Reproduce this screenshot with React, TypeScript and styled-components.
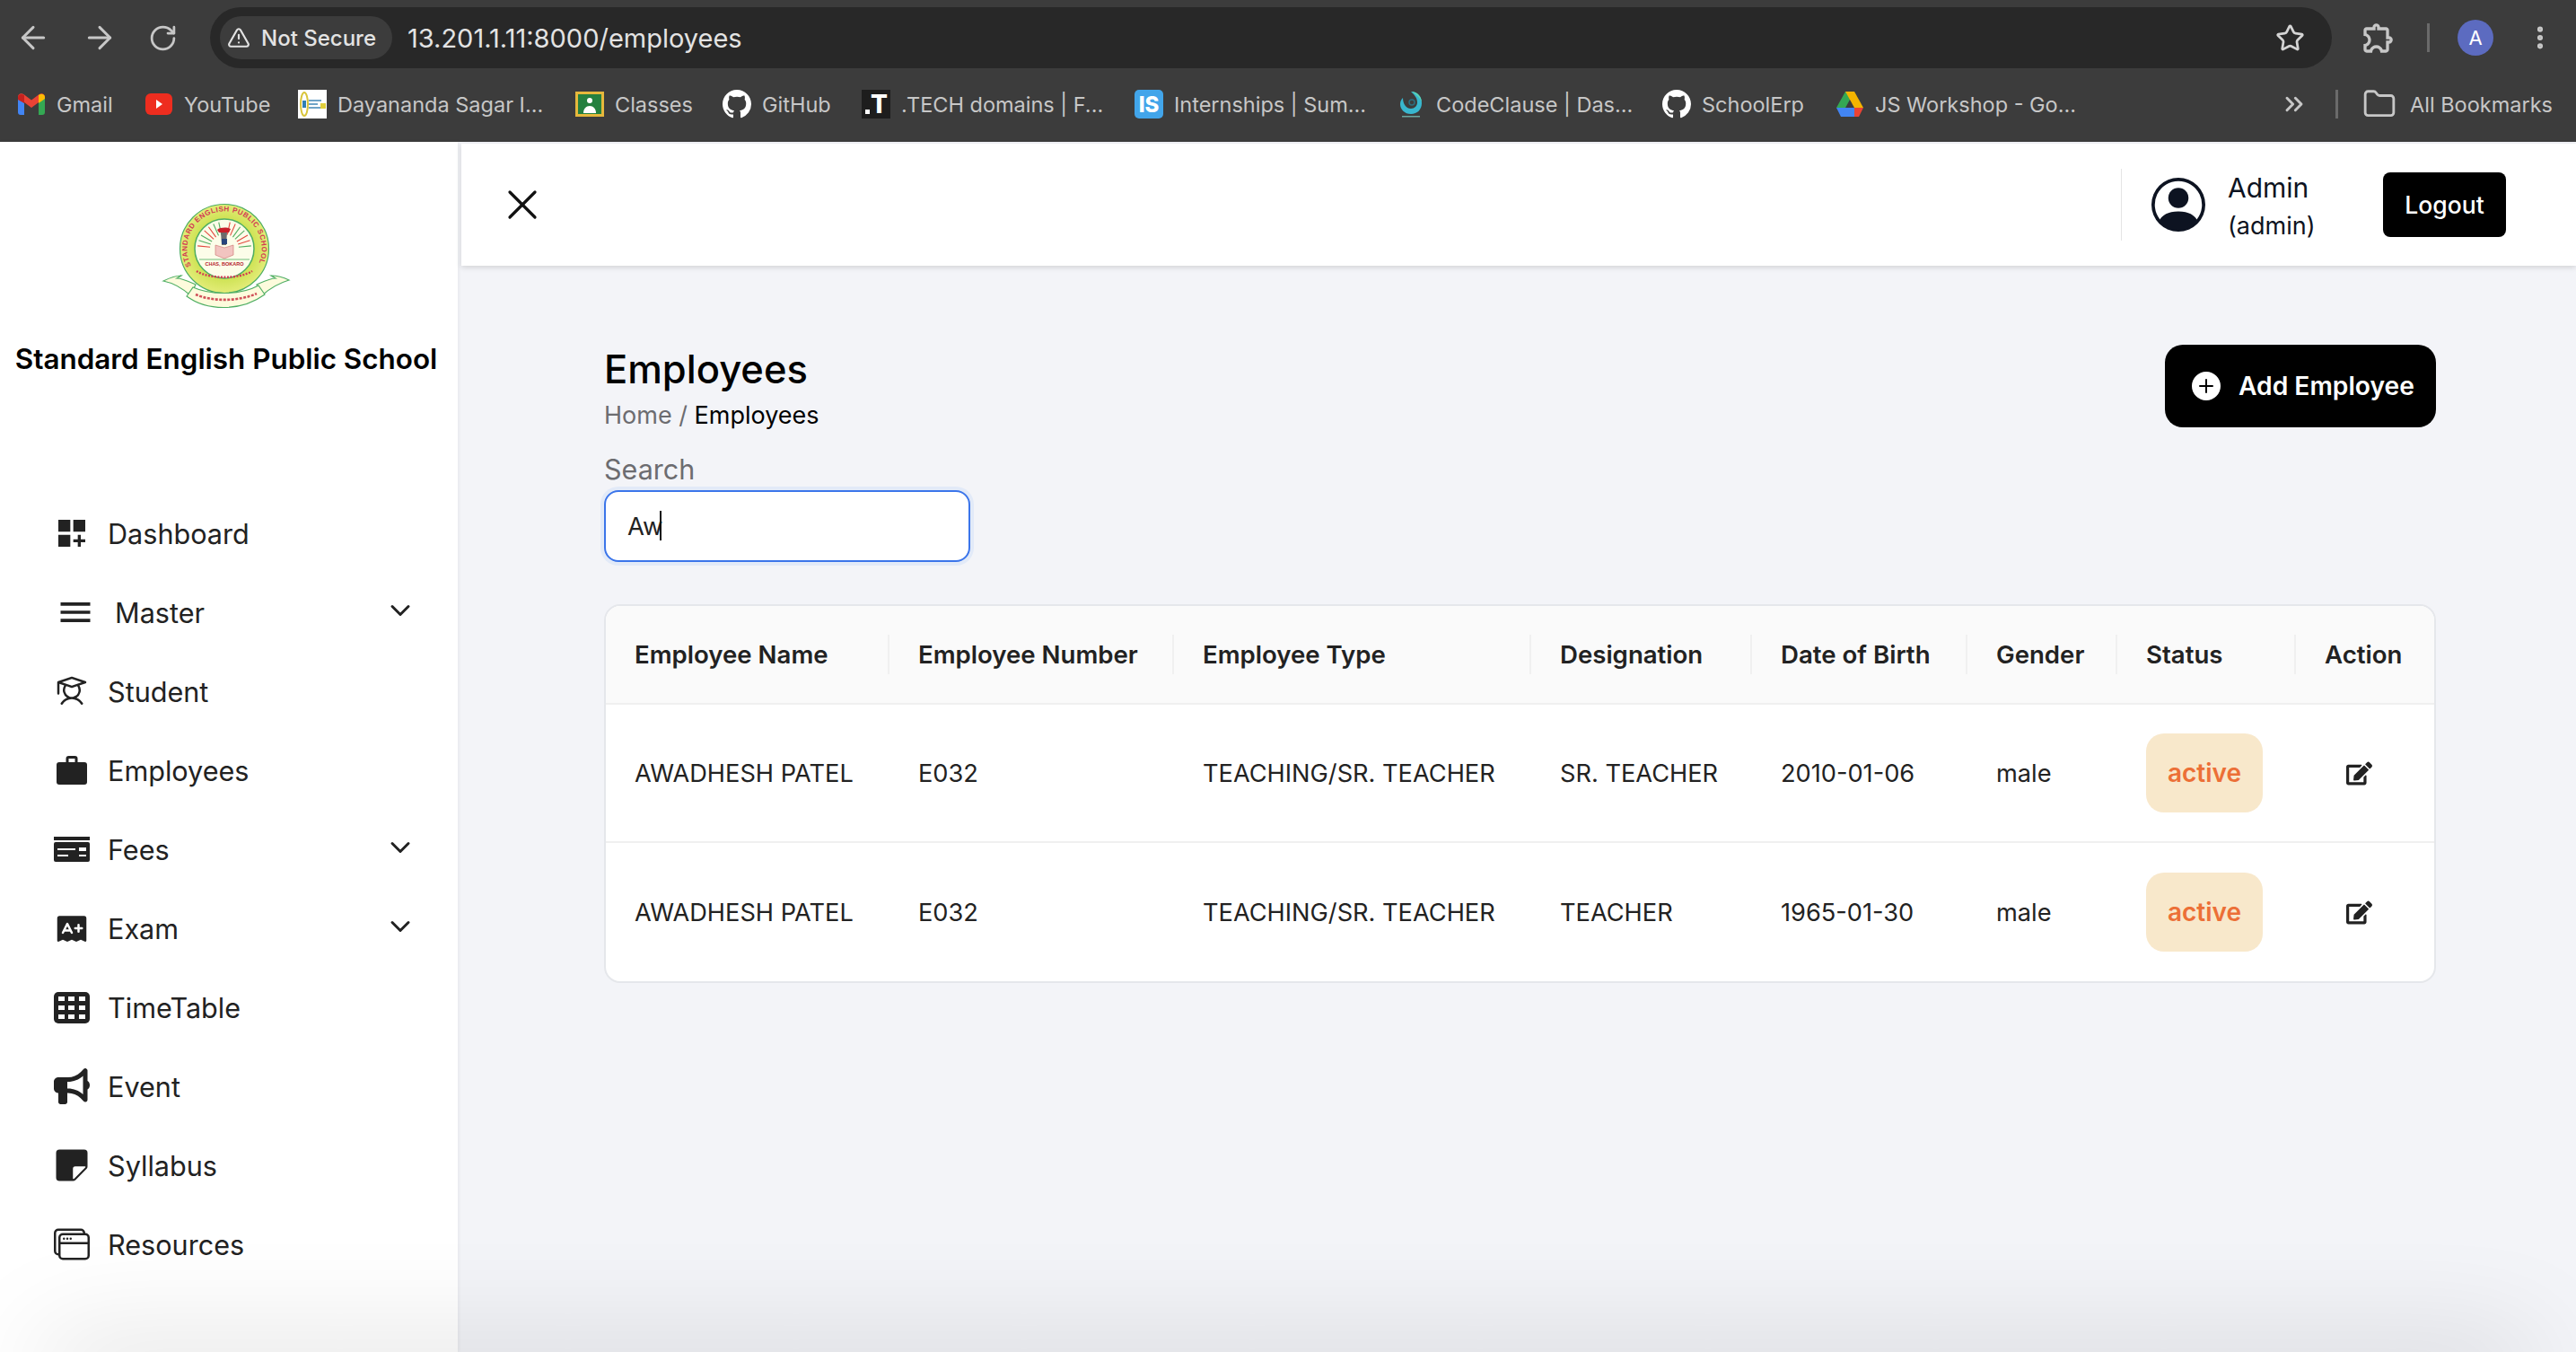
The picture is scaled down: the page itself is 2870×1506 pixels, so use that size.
import styled, { createGlobalStyle } from "styled-components";
import { ReactNode } from "react";
import {
  ArrowLeft,
  ArrowRight,
  ChevronDown,
  ChevronsRight,
  EllipsisVertical,
  Folder,
  RotateCw,
  Star,
  TriangleAlert,
  X,
} from "lucide-react";
import { BsGithub, BsPersonCircle, BsPlusCircleFill, BsStickyFill, BsWindowStack } from "react-icons/bs";
import { FaEdit } from "react-icons/fa";
import { FaBullhorn } from "react-icons/fa6";
import { MdDashboardCustomize, MdMenu, MdOutlineExtension } from "react-icons/md";
import { PiExamFill, PiStudent } from "react-icons/pi";

const GmailIcon = () => (
  <svg width="30" height="24" viewBox="0 0 30 24">
    <path d="M0 4v17a3 3 0 0 0 3 3h4V11z" fill="#4285f4" />
    <path d="M30 4v17a3 3 0 0 1-3 3h-4V11z" fill="#34a853" />
    <path d="M0 4c0-4 4-5 7-2.500l8 6 8-6c3-2.500 7-1.500 7 2.500l-7 6-8 6-8-6z" fill="#ea4335" />
    <path d="M23 2v9l7-5V4c0-3-4-4.500-7-2z" fill="#fbbc04" />
    <path d="M0 4v3l7 4V2C4 0 0 1 0 4z" fill="#c5221f" />
  </svg>
);

const YoutubeIcon = () => (
  <svg width="30" height="32" viewBox="0 0 30 32">
    <rect y="4" width="30" height="24" rx="6" fill="#ee2d1f" />
    <path d="M12 11l7 5-7 5z" fill="#fff" />
  </svg>
);

const CollegeIcon = () => (
  <svg width="32" height="32" viewBox="0 0 32 32">
    <rect width="32" height="32" fill="#fff" />
    <ellipse cx="7" cy="16" rx="4" ry="13" fill="none" stroke="#d8c43a" strokeWidth="2" />
    <rect x="5" y="12" width="4" height="8" fill="#2f7fb5" />
    <rect x="12" y="11" width="14" height="2" fill="#6fa3c7" />
    <rect x="12" y="15" width="10" height="2" fill="#6fa3c7" />
    <rect x="12" y="19" width="14" height="2" fill="#6fa3c7" />
    <rect x="25" y="15" width="6" height="6" fill="#e0cf3c" />
  </svg>
);

const ClassesIcon = () => (
  <svg width="32" height="32" viewBox="0 0 32 32">
    <rect y="2" width="32" height="28" fill="#e6b83c" />
    <rect x="3" y="5" width="26" height="22" fill="#25803f" />
    <circle cx="16" cy="12" r="3" fill="#fff" />
    <path d="M9 26c0-5 3-8 7-8s7 3 7 8z" fill="#fff" />
  </svg>
);

const DotTIcon = () => (
  <TechTile>
    <TechDot />T
  </TechTile>
);

const InternshipIcon = () => <InternTile>IS</InternTile>;

const CodeClauseIcon = () => (
  <svg width="26" height="32" viewBox="0 0 26 32">
    <path d="M13 2c8 0 12 6 12 13 0 7-5 12-12 12S1 22 1 16c0-3 1-5 3-7 0 6 3 12 9 12 4 0 7-3 7-7 0-5-3-8-7-12z" fill="#38b7cf" />
    <path d="M14 2c6 1 11 5 11 13 0-4-4-8-11-13z" fill="#5fd6b0" />
    <circle cx="14" cy="14" r="3" fill="none" stroke="#2b6f80" strokeWidth="1.500" />
    <rect x="3" y="29" width="20" height="1.500" fill="#6ba8a0" />
  </svg>
);

const DriveIcon = () => (
  <svg width="30" height="30" viewBox="0 0 30 30">
    <path d="M10 1h10L10 19H0z" fill="#34a853" />
    <path d="M20 1l10 18H20L10 1z" fill="#f4b400" />
    <path d="M0 19h20v10H5z" fill="#4285f4" />
    <path d="M20 19h10l-5 10h-5z" fill="#ea4335" />
  </svg>
);

const BriefcaseIcon = () => (
  <svg width="34" height="32" viewBox="0 0 34 32">
    <path d="M12 8V3a1.500 1.500 0 0 1 1.500-1.500h7A1.500 1.500 0 0 1 22 3v5" fill="none" stroke="#222" strokeWidth="3" />
    <rect y="7" width="34" height="25" rx="3" fill="#222" />
  </svg>
);

const FeesIcon = () => (
  <svg width="40" height="28" viewBox="0 0 40 28">
    <rect width="40" height="4" fill="#222" />
    <rect y="6" width="40" height="22" rx="2" fill="#222" />
    <rect x="4" y="13" width="20" height="2" fill="#fff" />
    <rect x="28" y="12" width="8" height="4" fill="#fff" />
    <rect x="4" y="20" width="12" height="2" fill="#fff" />
    <rect x="28" y="20" width="8" height="2" fill="#fff" />
  </svg>
);

const TimetableIcon = () => (
  <svg width="40" height="35" viewBox="0 0 40 35">
    <rect width="40" height="35" rx="5" fill="#222" />
    {[5, 16, 28].map((x) =>
      [5, 15, 25].map((y) => <rect key={`${x}-${y}`} x={x} y={y} width="7" height="5" fill="#fff" />)
    )}
  </svg>
);

const SchoolLogo = () => (
  <LogoSvg width="140" height="113" viewBox="0 0 140 113">
    <defs>
      <path id="crest-arc" d="M 31 66 A 41.600 41.600 0 1 1 105 66" />
      <radialGradient id="crest-ring">
        <stop offset="62%" stopColor="#cbe14f" />
        <stop offset="100%" stopColor="#e3ec78" />
      </radialGradient>
    </defs>
    <path d="M0 83c8-4 14-6 20-6l-5 3c6 0 12 3 21 7l-6 12C20 90 10 85 0 83z" fill="#fdfbdc" stroke="#4fae63" strokeWidth="1.200" />
    <path d="M140 82c-8-4-14-5-20-5l5 3c-6 0-12 3-21 7l6 12c10-9 20-14 30-17z" fill="#fdfbdc" stroke="#4fae63" strokeWidth="1.200" />
    <circle cx="68" cy="47" r="49.500" fill="url(#crest-ring)" stroke="#4fae63" strokeWidth="1.200" />
    <circle cx="68" cy="47" r="33" fill="#fcfde9" stroke="#4fae63" strokeWidth="1.500" />
    <text fontFamily="Liberation Sans, sans-serif" fontSize="8" fontWeight="700" fill="#d23a52">
      <textPath href="#crest-arc" textLength="166">
        STANDARD ENGLISH PUBLIC SCHOOL
      </textPath>
    </text>
    {[-84, -60, -36, -12, 12, 36, 60, 84].map((a, i) => (
      <line
        key={a}
        x1="68"
        y1="31"
        x2="68"
        y2="17"
        stroke={i % 2 ? "#50ad60" : "#e2483f"}
        strokeWidth="1.100"
        transform={`rotate(${a} 68 47)`}
      />
    ))}
    {[-72, -48, -24, 24, 48, 72].map((a, i) => (
      <line
        key={a}
        x1="68"
        y1="31"
        x2="68"
        y2="17"
        stroke={i % 2 ? "#e2483f" : "#50ad60"}
        strokeWidth="1.100"
        transform={`rotate(${a} 68 47)`}
      />
    ))}
    <path d="M60 26c3-3 12-3 15-1l-2 4H62z" fill="#c8202a" />
    <path d="M64 29h7l-1 14h-5z" fill="#6b6b6b" />
    <rect x="65" y="36" width="6" height="6" fill="#26457c" />
    <path d="M58 43l10 3 10-3v11l-10 4-10-4z" fill="#f2c4c0" stroke="#c9706d" strokeWidth="0.600" />
    <line x1="40" y1="59" x2="96" y2="59" stroke="#4fae63" strokeWidth="0.800" />
    <text x="68" y="66" textAnchor="middle" fontFamily="Liberation Sans, sans-serif" fontSize="5.500" fontWeight="700" fill="#b5202c">
      CHAS, BOKARO
    </text>
    <path d="M37 72c14 9 48 9 62 0" fill="none" stroke="#d23a52" strokeWidth="2.400" strokeDasharray="2 1.500" />
    <path d="M33 90c20 9 53 9 73-2l7 10c-26 19-64 19-87 2z" fill="#fdfbdc" stroke="#4fae63" strokeWidth="1.200" />
    <path d="M36 98c18 8 48 8 68-1" fill="none" stroke="#d0525a" strokeWidth="2.600" strokeDasharray="3 1.500" />
  </LogoSvg>
);

const bookmarks: { label: string; width: number; icon: ReactNode }[] = [
  { label: "Gmail", width: 142, icon: <GmailIcon /> },
  { label: "YouTube", width: 171, icon: <YoutubeIcon /> },
  { label: "Dayananda Sagar I...", width: 309, icon: <CollegeIcon /> },
  { label: "Classes", width: 164, icon: <ClassesIcon /> },
  { label: "GitHub", width: 155, icon: <BsGithub size={32} color="#fff" /> },
  { label: ".TECH domains | F...", width: 304, icon: <DotTIcon /> },
  { label: "Internships | Sum...", width: 292, icon: <InternshipIcon /> },
  { label: "CodeClause | Das...", width: 296, icon: <CodeClauseIcon /> },
  { label: "SchoolErp", width: 193, icon: <BsGithub size={32} color="#fff" /> },
  { label: "JS Workshop - Go...", width: 495, icon: <DriveIcon /> },
];

const navItems: { label: string; icon: ReactNode; slot?: number; caret?: boolean }[] = [
  { label: "Dashboard", icon: <MdDashboardCustomize size={40} /> },
  { label: "Master", icon: <MdMenu size={44} />, slot: 48, caret: true },
  { label: "Student", icon: <PiStudent size={40} /> },
  { label: "Employees", icon: <BriefcaseIcon /> },
  { label: "Fees", icon: <FeesIcon />, caret: true },
  { label: "Exam", icon: <PiExamFill size={40} />, caret: true },
  { label: "TimeTable", icon: <TimetableIcon /> },
  { label: "Event", icon: <FaBullhorn size={40} /> },
  { label: "Syllabus", icon: <BsStickyFill size={40} /> },
  { label: "Resources", icon: <BsWindowStack size={40} /> },
];

const columns = [
  { title: "Employee Name", width: 316 },
  { title: "Employee Number", width: 317 },
  { title: "Employee Type", width: 398 },
  { title: "Designation", width: 246 },
  { title: "Date of Birth", width: 240 },
  { title: "Gender", width: 167 },
  { title: "Status", width: 199 },
  { title: "Action", width: 154 },
];

const employees = [
  { name: "AWADHESH PATEL", no: "E032", type: "TEACHING/SR. TEACHER", designation: "SR. TEACHER", dob: "2010-01-06", gender: "male" },
  { name: "AWADHESH PATEL", no: "E032", type: "TEACHING/SR. TEACHER", designation: "TEACHER", dob: "1965-01-30", gender: "male" },
];

export default function App() {
  return (
    <>
      <GlobalStyle />
      <Page>
        <Chrome>
          <ToolRow>
            <NavButtons>
              <ArrowLeft size={40} strokeWidth={1.8} />
              <ArrowRight size={40} strokeWidth={1.8} />
              <RotateCw size={33} strokeWidth={2} />
            </NavButtons>
            <Omnibox>
              <SecurityChip>
                <TriangleAlert size={26} />
                Not Secure
              </SecurityChip>
              <Url>13.201.1.11:8000/employees</Url>
              <Star size={33} />
            </Omnibox>
            <ToolIcons>
              <MdOutlineExtension size={40} />
              <ToolDivider />
              <ProfileDot>A</ProfileDot>
              <EllipsisVertical size={32} strokeWidth={2.6} />
            </ToolIcons>
          </ToolRow>
          <BookmarkRow>
            {bookmarks.map((b) => (
              <Bookmark key={b.label} $width={b.width}>
                <FavSlot>{b.icon}</FavSlot>
                {b.label}
              </Bookmark>
            ))}
            <ChevronsRight size={32} strokeWidth={2.2} />
            <BarDivider />
            <AllBookmarks>
              <Folder size={38} strokeWidth={1.8} />
              All Bookmarks
            </AllBookmarks>
          </BookmarkRow>
        </Chrome>

        <Body>
          <Sidebar>
            <Brand>
              <SchoolLogo />
              <BrandName>Standard English Public School</BrandName>
            </Brand>
            <Nav>
              {navItems.map((item) => (
                <NavRow key={item.label}>
                  <NavIcon $width={item.slot ?? 40}>{item.icon}</NavIcon>
                  <span>{item.label}</span>
                  {item.caret && (
                    <Caret>
                      <ChevronDown size={36} strokeWidth={2} />
                    </Caret>
                  )}
                </NavRow>
              ))}
            </Nav>
          </Sidebar>

          <Main>
            <TopBar>
              <X size={56} strokeWidth={1.4} color="#111" />
              <UserArea>
                <BsPersonCircle size={60} color="#0d1321" />
                <UserText>
                  <UserName>Admin</UserName>
                  <UserRole>(admin)</UserRole>
                </UserText>
                <LogoutButton>Logout</LogoutButton>
              </UserArea>
            </TopBar>

            <Content>
              <PageHead>
                <div>
                  <Title>Employees</Title>
                  <Crumbs>
                    Home / <b>Employees</b>
                  </Crumbs>
                </div>
                <AddButton>
                  <BsPlusCircleFill size={32} />
                  Add Employee
                </AddButton>
              </PageHead>

              <SearchLabel>Search</SearchLabel>
              <SearchBox>
                <SearchInput defaultValue="Aw" readOnly />
                <InputCaret />
              </SearchBox>

              <TableCard>
                <Table>
                  <colgroup>
                    {columns.map((c) => (
                      <Col key={c.title} $width={c.width} />
                    ))}
                  </colgroup>
                  <thead>
                    <tr>
                      {columns.map((c) => (
                        <Th key={c.title}>{c.title}</Th>
                      ))}
                    </tr>
                  </thead>
                  <tbody>
                    {employees.map((e) => (
                      <tr key={e.dob}>
                        <Td>{e.name}</Td>
                        <Td>{e.no}</Td>
                        <Td>{e.type}</Td>
                        <Td>{e.designation}</Td>
                        <Td>{e.dob}</Td>
                        <Td>{e.gender}</Td>
                        <Td>
                          <Badge>active</Badge>
                        </Td>
                        <Td>
                          <EditIcon size={29} />
                        </Td>
                      </tr>
                    ))}
                  </tbody>
                </Table>
              </TableCard>
            </Content>
          </Main>
        </Body>
        <BottomShadow />
      </Page>
    </>
  );
}

const GlobalStyle = createGlobalStyle`
  html, body, #root {
    margin: 0;
    padding: 0;
    height: 100%;
  }
  body {
    overflow: hidden;
    font-family: Inter, "Liberation Sans", sans-serif;
  }
`;

const Page = styled.div`
  display: flex;
  flex-direction: column;
  width: 2870px;
  height: 1506px;
  overflow: hidden;
  background: #f3f4f8;
`;

const Chrome = styled.div`
  flex: none;
  height: 158px;
  background: #3c3c3c;
  color: #c7c7c7;
`;

const ToolRow = styled.div`
  display: flex;
  align-items: center;
  height: 84px;
`;

const NavButtons = styled.div`
  display: flex;
  align-items: center;
  gap: 34px;
  width: 234px;
  padding-left: 17px;
  box-sizing: border-box;
`;

const Omnibox = styled.div`
  display: flex;
  align-items: center;
  width: 2364px;
  height: 68px;
  padding: 0 30px 0 11px;
  box-sizing: border-box;
  border-radius: 34px;
  background: #282828;
  color: #d4d4d4;
`;

const SecurityChip = styled.div`
  display: flex;
  align-items: center;
  gap: 12px;
  width: 192px;
  height: 48px;
  padding-left: 8px;
  box-sizing: border-box;
  border-radius: 24px;
  background: #3c3c3c;
  color: #e3e3e3;
  font-size: 24px;
  font-weight: 500;
  white-space: nowrap;
`;

const Url = styled.div`
  flex: 1;
  margin-left: 17px;
  color: #e3e3e3;
  font-size: 29px;
`;

const ToolIcons = styled.div`
  display: flex;
  align-items: center;
  padding-left: 32px;
`;

const ToolDivider = styled.div`
  width: 3px;
  height: 32px;
  margin: 0 31px 0 34px;
  background: #6a6a6a;
`;

const ProfileDot = styled.div`
  display: flex;
  align-items: center;
  justify-content: center;
  width: 40px;
  height: 40px;
  margin-right: 36px;
  border-radius: 50%;
  background: #5c6bc0;
  color: #fff;
  font-size: 22px;
`;

const BookmarkRow = styled.div`
  display: flex;
  align-items: center;
  height: 64px;
  padding-left: 19px;
  font-size: 23.5px;
  white-space: nowrap;
`;

const Bookmark = styled.div<{ $width: number }>`
  display: flex;
  align-items: center;
  gap: 12px;
  flex: none;
  width: ${({ $width }) => $width}px;
`;

const FavSlot = styled.div`
  display: flex;
  align-items: center;
  justify-content: center;
  width: 32px;
  height: 32px;
`;

const TechTile = styled.div`
  position: relative;
  width: 32px;
  height: 32px;
  background: #1d1d1d;
  color: #fff;
  font-size: 28px;
  font-weight: 800;
  line-height: 32px;
  text-align: right;
  padding-right: 3px;
  box-sizing: border-box;
`;

const TechDot = styled.i`
  position: absolute;
  left: 4px;
  bottom: 5px;
  width: 5px;
  height: 5px;
  background: #fff;
`;

const InternTile = styled.div`
  display: flex;
  align-items: center;
  justify-content: center;
  width: 32px;
  height: 32px;
  border-radius: 5px;
  background: #42a5ea;
  color: #fff;
  font-size: 24px;
  font-weight: 800;
`;

const BarDivider = styled.div`
  width: 3px;
  height: 32px;
  margin: 0 27px 0 30px;
  background: #6a6a6a;
`;

const AllBookmarks = styled.div`
  display: flex;
  align-items: center;
  gap: 15px;
`;

const Body = styled.div`
  flex: 1;
  display: flex;
  min-height: 0;
`;

const Sidebar = styled.aside`
  flex: none;
  width: 510px;
  padding-top: 72px;
  box-sizing: border-box;
  background: #fff;
  box-shadow: 1px 0 4px rgba(0, 0, 0, 0.06);
`;

const Brand = styled.div`
  display: flex;
  flex-direction: column;
  align-items: center;
  padding-right: 6px;
`;

const LogoSvg = styled.svg`
  display: block;
  overflow: visible;
`;

const BrandName = styled.div`
  margin-top: 37px;
  color: #000;
  font-size: 31.4px;
  font-weight: 600;
  line-height: 40px;
  white-space: nowrap;
`;

const Nav = styled.nav`
  margin-top: 130px;
`;

const NavRow = styled.div`
  display: flex;
  align-items: center;
  height: 88px;
  padding: 0 46px 0 60px;
  color: #222;
  font-size: 30.6px;
`;

const NavIcon = styled.div<{ $width: number }>`
  display: flex;
  align-items: center;
  justify-content: center;
  flex: none;
  width: ${({ $width }) => $width}px;
  margin-right: 20px;
  color: #222;
`;

const Caret = styled.div`
  display: flex;
  margin: 0 0 4px auto;
`;

const Main = styled.main`
  flex: 1;
  min-width: 0;
`;

const TopBar = styled.header`
  display: flex;
  align-items: center;
  justify-content: space-between;
  height: 136px;
  margin: 2px 0 0 4px;
  padding: 0 78px 0 40px;
  background: #fff;
  box-shadow: 0 2px 6px rgba(0, 0, 0, 0.14);
`;

const UserArea = styled.div`
  display: flex;
  align-items: center;
  height: 80px;
  padding-left: 33px;
  border-left: 1px solid #e5e5e5;
`;

const UserText = styled.div`
  width: 173px;
  margin-left: 25px;
  padding-top: 4px;
  color: #0d1321;
`;

const UserName = styled.div`
  font-size: 30px;
  line-height: 44px;
`;

const UserRole = styled.div`
  font-size: 27px;
  line-height: 42px;
`;

const LogoutButton = styled.button`
  width: 137px;
  height: 72px;
  padding: 0;
  border: 0;
  border-radius: 8px;
  background: #000;
  color: #fff;
  font-family: inherit;
  font-size: 26.5px;
  font-weight: 500;
`;

const Content = styled.div`
  padding: 88px 156px 0 163px;
`;

const PageHead = styled.div`
  display: flex;
  align-items: flex-start;
  justify-content: space-between;
`;

const Title = styled.h1`
  margin: 0;
  color: #000;
  font-size: 43.5px;
  font-weight: 500;
  line-height: 54px;
`;

const Crumbs = styled.div`
  margin-top: 7px;
  color: #6c6c70;
  font-size: 27px;
  line-height: 36px;

  b {
    color: #000;
    font-weight: 400;
  }
`;

const AddButton = styled.button`
  display: flex;
  align-items: center;
  gap: 20px;
  width: 302px;
  height: 92px;
  padding: 0 0 0 30px;
  border: 0;
  border-radius: 20px;
  background: #000;
  color: #fff;
  font-family: inherit;
  font-size: 28.2px;
  font-weight: 600;
`;

const SearchLabel = styled.label`
  display: block;
  margin-top: 24px;
  color: #6c6c70;
  font-size: 30.5px;
  line-height: 36px;
`;

const SearchBox = styled.div`
  position: relative;
  width: 408px;
  height: 80px;
  margin-top: 5px;
`;

const SearchInput = styled.input`
  width: 100%;
  height: 100%;
  padding: 0 24px;
  box-sizing: border-box;
  border: 2px solid #3b75ea;
  border-radius: 16px;
  outline: none;
  box-shadow: 0 0 0 4px #e2eaf8;
  background: #fff;
  color: #222;
  font-family: inherit;
  font-size: 27.5px;
`;

const InputCaret = styled.i`
  position: absolute;
  left: 62px;
  top: 23px;
  width: 2px;
  height: 33px;
  background: #111;
`;

const TableCard = styled.div`
  margin-top: 47px;
  border: 2px solid #e5e7eb;
  border-radius: 18px;
  overflow: hidden;
  background: #fff;
`;

const Table = styled.table`
  width: 100%;
  table-layout: fixed;
  border-collapse: separate;
  border-spacing: 0;
`;

const Col = styled.col<{ $width: number }>`
  width: ${({ $width }) => $width}px;
`;

const Th = styled.th`
  position: relative;
  height: 108px;
  padding: 0 0 0 32px;
  border-bottom: 2px solid #f0f0f0;
  background: #fafafa;
  color: #222;
  font-size: 27.6px;
  font-weight: 600;
  text-align: left;
  white-space: nowrap;

  &:not(:last-child)::after {
    content: "";
    position: absolute;
    right: 0;
    top: 50%;
    width: 2px;
    height: 44px;
    margin-top: -22px;
    background: #f0f0f0;
  }
`;

const Td = styled.td`
  height: 152px;
  padding: 0 0 0 32px;
  border-bottom: 2px solid #f0f0f0;
  color: #222;
  font-size: 27.2px;
  white-space: nowrap;

  tr:last-child > & {
    border-bottom: 0;
    height: 154px;
  }
`;

const Badge = styled.div`
  display: flex;
  align-items: center;
  justify-content: center;
  width: 130px;
  height: 88px;
  border-radius: 20px;
  background: #f8e8cb;
  color: #ec6f37;
  font-size: 28px;
  font-weight: 600;
`;

const EditIcon = styled(FaEdit)`
  display: block;
  margin-left: 24px;
  color: #222;
`;

const BottomShadow = styled.div`
  position: fixed;
  left: 50px;
  right: 50px;
  bottom: -40px;
  height: 40px;
  box-shadow: 0 0 120px rgba(0, 0, 0, 0.22);
  pointer-events: none;
`;
